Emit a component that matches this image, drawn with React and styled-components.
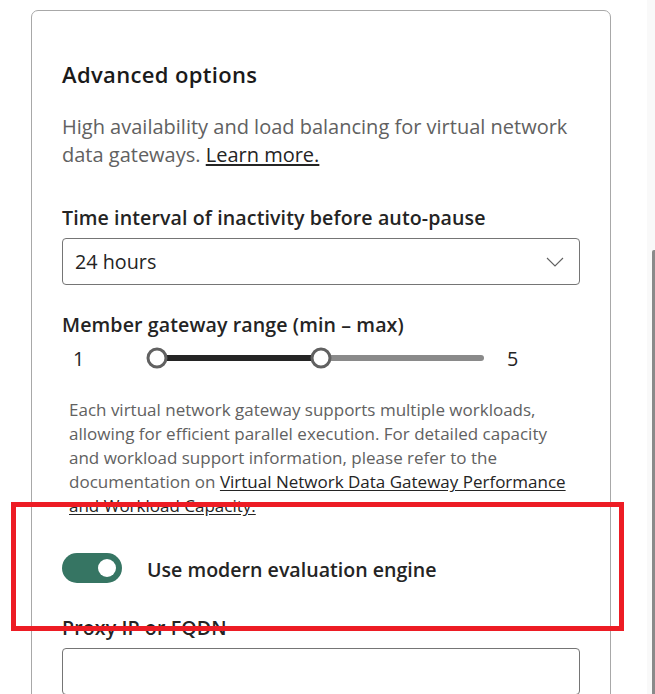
import React, { useState } from "react";
import styled, { createGlobalStyle } from "styled-components";

const GlobalStyle = createGlobalStyle`
  html, body {
    margin: 0;
    padding: 0;
    background: #ffffff;
    overflow: hidden;
  }
  body {
    font-family: "Open Sans", "Noto Sans", sans-serif;
    color: #242424;
  }
`;

const helpLines = [
  "Each virtual network gateway supports multiple workloads,",
  "allowing for efficient parallel execution. For detailed capacity",
  "and workload support information, please refer to the",
];

const App = () => {
  const [range] = useState({ min: 1, max: 5, low: 1, high: 3 });
  const [modern, setModern] = useState(true);

  const pct = (v) => ((v - range.min) / (range.max - range.min)) * 100;

  return (
    <Page>
      <GlobalStyle />
      <Main>
        <Card>
          <Heading>Advanced options</Heading>
          <Description>
            High availability and load balancing for virtual network data
            gateways. <Link href="#">Learn more.</Link>
          </Description>

          <FieldLabel $top={36}>Time interval of inactivity before auto-pause</FieldLabel>
          <Dropdown>
            <span>24 hours</span>
            <svg width="18" height="10" viewBox="0 0 18 10" fill="none">
              <path d="M1 1l8 8 8-8" stroke="#616161" strokeWidth="1.1" />
            </svg>
          </Dropdown>

          <FieldLabel $top={27}>Member gateway range (min – max)</FieldLabel>
          <SliderRow>
            <RangeValue>{range.min}</RangeValue>
            <TrackArea>
              <Rail>
                <Fill
                  style={{
                    left: `${pct(range.low)}%`,
                    width: `${pct(range.high) - pct(range.low)}%`,
                  }}
                />
                <Thumb style={{ left: `${pct(range.low)}%` }} />
                <Thumb style={{ left: `${pct(range.high)}%` }} />
              </Rail>
            </TrackArea>
            <RangeValue $gap={20}>{range.max}</RangeValue>
          </SliderRow>

          <HelpText>
            {helpLines.map((line) => (
              <React.Fragment key={line}>
                {line}
                <br />
              </React.Fragment>
            ))}
            documentation on{" "}
            <Link href="#">
              Virtual Network Data Gateway Performance
              <br />
              and Workload Capacity.
            </Link>
          </HelpText>

          <ToggleRow>
            <Switch
              type="button"
              $on={modern}
              aria-pressed={modern}
              onClick={() => setModern(!modern)}
            >
              <Knob />
            </Switch>
            <ToggleLabel>Use modern evaluation engine</ToggleLabel>
          </ToggleRow>

          <FieldLabel $top={32}>Proxy IP or FQDN</FieldLabel>
          <TextInput type="text" />
        </Card>
        <Highlight />
      </Main>
      <ScrollTrack>
        <ScrollThumb />
      </ScrollTrack>
    </Page>
  );
};

const Page = styled.div`
  display: flex;
  width: 655px;
  height: 694px;
  overflow: hidden;
`;

const Main = styled.div`
  position: relative;
  flex: 1;
  padding: 10px 0 0 31px;
`;

const Card = styled.div`
  width: 580px;
  box-sizing: border-box;
  min-height: 760px;
  border: 1px solid #a8a8a8;
  border-radius: 7px;
  padding: 49px 30px 0 30px;
`;

const Heading = styled.h2`
  margin: 0;
  font-size: 22px;
  line-height: 28px;
  font-weight: 600;
  color: #1a1a1a;
  letter-spacing: 0.35px;
`;

const Description = styled.p`
  margin: 25px 0 0;
  font-size: 20px;
  line-height: 28px;
  color: #616161;
`;

const Link = styled.a`
  color: #242424;
  text-decoration: underline;
  text-underline-offset: 2px;
`;

const FieldLabel = styled.div`
  margin-top: ${(p) => p.$top}px;
  font-size: 19.6px;
  line-height: 26px;
  font-weight: 600;
  color: #242424;
  letter-spacing: 0.1px;
`;

const Dropdown = styled.div`
  margin-top: 7px;
  height: 47px;
  box-sizing: border-box;
  border: 1px solid #757575;
  border-radius: 4px;
  padding: 0 12px 0 12px;
  display: flex;
  align-items: center;
  justify-content: space-between;
  font-size: 19.75px;
  color: #242424;
  svg {
    margin-right: 3px;
  }
`;

const SliderRow = styled.div`
  margin-top: 5px;
  height: 30px;
  display: flex;
  align-items: center;
  padding-left: 11px;
`;

const RangeValue = styled.span`
  width: ${(p) => (p.$gap ? "auto" : "74px")};
  margin-left: ${(p) => p.$gap || 0}px;
  font-size: 19.75px;
  color: #242424;
`;

const TrackArea = styled.div`
  width: 340px;
  height: 30px;
  display: flex;
  align-items: center;
  padding: 0 3px 0 10px;
  box-sizing: border-box;
`;

const Rail = styled.div`
  position: relative;
  flex: 1;
  height: 6px;
  border-radius: 3px;
  background: #8a8a8a;
`;

const Fill = styled.div`
  position: absolute;
  top: 0;
  bottom: 0;
  background: #242424;
`;

const Thumb = styled.span`
  position: absolute;
  top: 50%;
  width: 21px;
  height: 21px;
  box-sizing: border-box;
  border: 3px solid #616161;
  border-radius: 50%;
  background: #ffffff;
  transform: translate(-50%, -50%);
`;

const HelpText = styled.p`
  margin: 25px 0 0;
  padding-left: 7px;
  font-size: 17px;
  line-height: 24px;
  color: #616161;
  white-space: nowrap;
`;

const ToggleRow = styled.div`
  margin-top: 35px;
  display: flex;
  align-items: center;
  gap: 25px;
`;

const Switch = styled.button`
  width: 60px;
  height: 30px;
  border: none;
  border-radius: 15px;
  background: ${(p) => (p.$on ? "#367563" : "#8a8a8a")};
  display: flex;
  align-items: center;
  justify-content: ${(p) => (p.$on ? "flex-end" : "flex-start")};
  padding: 0 6px;
  cursor: pointer;
`;

const Knob = styled.span`
  width: 18px;
  height: 18px;
  border-radius: 50%;
  background: #ffffff;
`;

const ToggleLabel = styled.span`
  font-size: 19.6px;
  font-weight: 600;
  color: #242424;
  margin-top: 3px;
`;

const TextInput = styled.input`
  display: block;
  margin-top: 7px;
  width: 100%;
  height: 47px;
  box-sizing: border-box;
  border: 1px solid #757575;
  border-radius: 4px;
  outline: none;
`;

const Highlight = styled.div`
  position: absolute;
  left: 11px;
  top: 502px;
  width: 613px;
  height: 129px;
  box-sizing: border-box;
  border: 5px solid #ed1c24;
  pointer-events: none;
`;

const ScrollTrack = styled.div`
  width: 8px;
  background: #f9f9f9;
  display: flex;
  flex-direction: column;
  align-items: flex-end;
  padding-top: 250px;
`;

const ScrollThumb = styled.div`
  width: 3px;
  flex: 1;
  background: #8a8a8a;
  border-top-left-radius: 2px;
`;

export default App;
